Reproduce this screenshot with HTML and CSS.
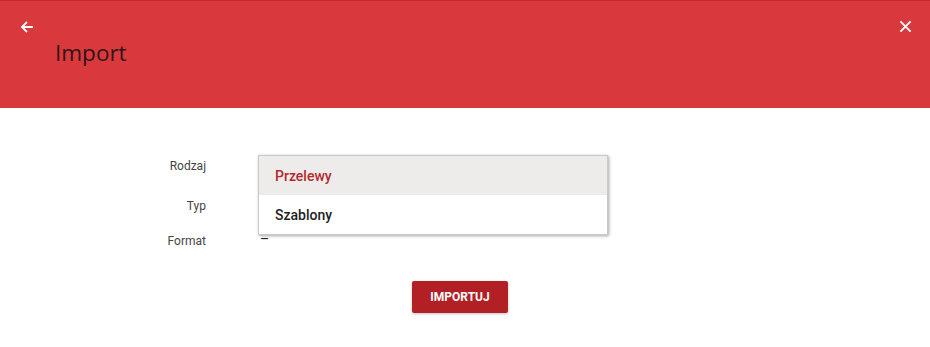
FILE: index.html
```html
<!DOCTYPE html>
<html lang="pl">
<head>
<meta charset="utf-8">
<link rel="stylesheet" href="styles.css">
</head>
<body>
<header class="header">
  <div class="header-bar">
    <button class="icon-btn back" aria-label="Wstecz">
      <svg width="14" height="14" viewBox="0 0 14 14"><path d="M13 7H2M7 2L2 7l5 5" fill="none" stroke="#fff" stroke-width="1.8"/></svg>
    </button>
    <button class="icon-btn close" aria-label="Zamknij">
      <svg width="14" height="14" viewBox="0 0 14 14"><path d="M1.5 1.5l11 11M12.5 1.5l-11 11" fill="none" stroke="#fff" stroke-width="2"/></svg>
    </button>
  </div>
  <h1 class="title">Import</h1>
</header>
<main class="content">
  <div class="form">
    <div class="row r1"><span class="label">Rodzaj</span><span class="value"></span></div>
    <div class="row r2"><span class="label">Typ</span><span class="value"></span></div>
    <div class="row r3"><span class="label">Format</span><span class="value dash">–</span></div>
    <ul class="menu">
      <li class="menu-item active">Przelewy</li>
      <li class="menu-item">Szablony</li>
    </ul>
  </div>
  <div class="actions">
    <button class="primary">IMPORTUJ</button>
  </div>
</main>
</body>
</html>
```
FILE: styles.css
```css
* { box-sizing: border-box; }
html, body { margin: 0; padding: 0; background: #fff; }
body { font-family: Roboto, "Noto Sans", sans-serif; color: #333; width: 930px; height: 347px; overflow: hidden; }

.header {
  background: #d9393d;
  height: 108px;
  border-top: 1px solid #c4282c;
  padding: 0 17px 0 14px;
}
.header-bar {
  display: flex;
  justify-content: space-between;
  padding-top: 17px;
}
.icon-btn {
  background: none; border: 0; padding: 0; margin: 0;
  width: 16px; height: 16px;
  display: flex; align-items: center; justify-content: center;
}
.back { margin-left: 5px; margin-top: 1px; }
.close svg { width: 13px; height: 13px; }
.title {
  margin: 2px 0 0 41px;
  font-family: "Open Sans", sans-serif;
  font-weight: 400;
  font-size: 22.5px;
  line-height: 32px;
  color: #2e1516;
}

.content { padding-top: 47px; }
.form {
  position: relative;
  width: 930px;
}
.row {
  display: flex;
  align-items: center;
  font-size: 12px;
}
.r1 { height: 22px; }
.r2 { height: 22px; margin-top: 18px; }
.r3 { height: 18px; margin-top: 15px; }
.label {
  width: 206px;
  text-align: right;
  color: #444;
}
.value {
  margin-left: 54px;
  color: #222;
}
.dash {
  font-size: 14px;
  line-height: 14px;
  margin-top: -4px;
}

.menu {
  position: absolute;
  left: 258px;
  top: 0;
  width: 350px;
  margin: 0; padding: 0;
  list-style: none;
  background: #fff;
  border: 1px solid #c9c9c9;
  box-shadow: 1px 1px 3px rgba(0,0,0,0.35);
}
.menu-item {
  height: 39px;
  display: flex;
  align-items: center;
  padding-left: 16px;
  font-size: 14px;
  font-weight: 500;
  color: #1e1e1e;
}
.menu-item.active {
  background: #eeeceb;
  color: #b3292d;
}

.actions {
  display: flex;
  justify-content: center;
  padding-top: 31px;
  padding-right: 10px;
}
.primary {
  background: #b21f24;
  color: #fff;
  border: 0;
  border-radius: 2px;
  width: 96px;
  height: 32px;
  font-family: Roboto, sans-serif;
  font-weight: 700;
  font-size: 12px;
  box-shadow: 0 1px 3px rgba(0,0,0,0.25);
}
```
